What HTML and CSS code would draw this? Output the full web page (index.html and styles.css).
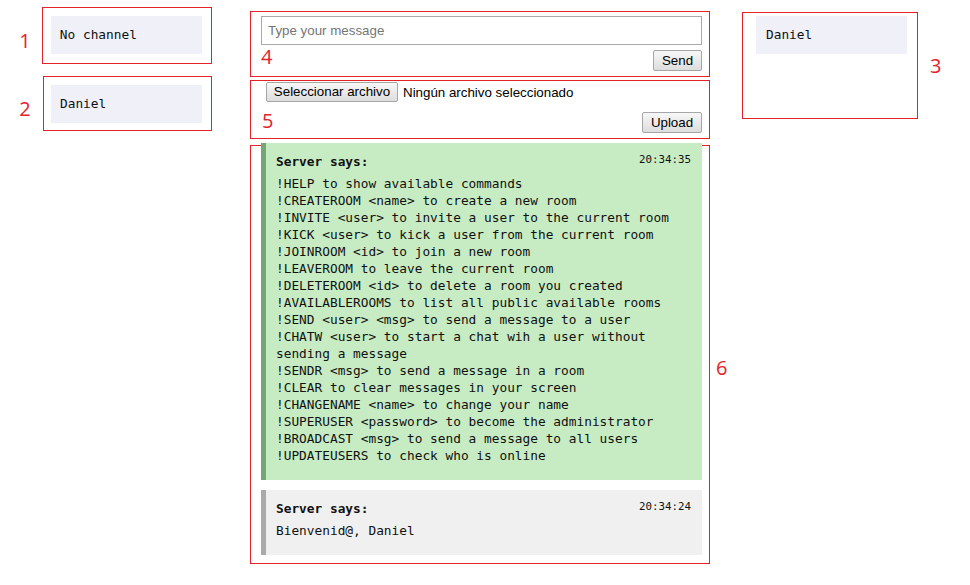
FILE: index.html
```html
<!DOCTYPE html>
<html>
<head>
<meta charset="utf-8">
<title>Chat</title>
<link rel="stylesheet" href="styles.css">
</head>
<body>
<div class="page">
  <div class="col-left">
    <div class="row row1">
      <span class="mark mark-left">1</span>
      <div class="box box1"><div class="chip">No channel</div></div>
    </div>
    <div class="row row2">
      <span class="mark mark-left">2</span>
      <div class="box box2"><div class="chip">Daniel</div></div>
    </div>
  </div>

  <div class="col-center">
    <div class="box box4">
      <input class="msg-input" type="text" placeholder="Type your message">
      <div class="bar">
        <span class="mark mark4">4</span>
        <button class="btn btn-send">Send</button>
      </div>
    </div>
    <div class="box box5">
      <div class="file-row">
        <button class="btn btn-file">Seleccionar archivo</button>
        <span class="file-name">Ningún archivo seleccionado</span>
      </div>
      <div class="bar bar5">
        <span class="mark mark5">5</span>
        <button class="btn btn-upload">Upload</button>
      </div>
    </div>
    <div class="row row6">
      <div class="box box6">
        <div class="messages">
          <div class="msg msg-help">
            <div class="msg-head"><span class="who">Server says:</span><span class="time">20:34:35</span></div>
            <div class="msg-body">
              <div>!HELP to show available commands</div>
              <div>!CREATEROOM &lt;name&gt; to create a new room</div>
              <div>!INVITE &lt;user&gt; to invite a user to the current room</div>
              <div>!KICK &lt;user&gt; to kick a user from the current room</div>
              <div>!JOINROOM &lt;id&gt; to join a new room</div>
              <div>!LEAVEROOM to leave the current room</div>
              <div>!DELETEROOM &lt;id&gt; to delete a room you created</div>
              <div>!AVAILABLEROOMS to list all public available rooms</div>
              <div>!SEND &lt;user&gt; &lt;msg&gt; to send a message to a user</div>
              <div>!CHATW &lt;user&gt; to start a chat wih a user without sending a message</div>
              <div>!SENDR &lt;msg&gt; to send a message in a room</div>
              <div>!CLEAR to clear messages in your screen</div>
              <div>!CHANGENAME &lt;name&gt; to change your name</div>
              <div>!SUPERUSER &lt;password&gt; to become the administrator</div>
              <div>!BROADCAST &lt;msg&gt; to send a message to all users</div>
              <div>!UPDATEUSERS to check who is online</div>
            </div>
          </div>
          <div class="msg msg-plain">
            <div class="msg-head"><span class="who">Server says:</span><span class="time">20:34:24</span></div>
            <div class="msg-body">
              <div>Bienvenid@, Daniel</div>
            </div>
          </div>
        </div>
      </div>
      <span class="mark mark6">6</span>
    </div>
  </div>

  <div class="col-right">
    <div class="row row3">
      <div class="box box3"><div class="chip chip3">Daniel</div></div>
      <span class="mark mark3">3</span>
    </div>
  </div>
</div>
</body>
</html>
```

FILE: styles.css
```css
* { box-sizing: border-box; }
html, body { margin: 0; padding: 0; background: #ffffff; }
body { font-family: "Liberation Sans", Arial, sans-serif; color: #000; }

.page { display: flex; align-items: flex-start; width: 970px; height: 585px; }

.row { display: flex; align-items: center; }

.box { border: 1px solid #e3222b; }

.mark {
  font-family: "Open Sans", "Liberation Sans", sans-serif;
  font-size: 20px;
  line-height: 20px;
  color: #e3222b;
}

/* left column */
.col-left { width: 212px; display: flex; flex-direction: column; }
.mark-left { width: 42px; text-align: center; padding-left: 8px; padding-top: 10px; }
.row1 { margin-top: 7px; }
.box1 { width: 171px; height: 57px; padding: 8px 0 0 8px; }
.row2 { margin-top: 12px; }
.box2 { width: 169px; height: 55px; margin-left: 1px; padding: 8px 0 0 7px; }

.chip {
  width: 151px;
  height: 38px;
  background: #eff0f8;
  padding-left: 9px;
  font-family: "DejaVu Sans Mono", "Liberation Mono", monospace;
  font-size: 12.8px;
  line-height: 38px;
  color: #111;
}
.chip3 { padding-left: 10px; }

/* center column */
.col-center { width: 478px; margin-left: 38px; display: flex; flex-direction: column; }

.box4 { width: 460px; height: 66px; margin-top: 11px; padding: 4px 7px 0 10px; }
.msg-input {
  display: block;
  width: 441px;
  height: 29px;
  border: 1px solid #a9a9a9;
  padding: 0 6px;
  font-family: "Liberation Sans", Arial, sans-serif;
  font-size: 13.33px;
  outline: none;
}
.msg-input::placeholder { color: #757575; }

.bar { display: flex; justify-content: space-between; align-items: flex-start; }
.mark4 { margin-top: 2px; margin-left: 0; }
.btn-send { margin-top: 5px; width: 49px; }

.btn {
  height: 21px;
  padding: 0 6px;
  border: 1px solid #a6a6a6;
  border-radius: 2px;
  background: linear-gradient(#f7f7f7, #dddddd);
  font-family: "Liberation Sans", Arial, sans-serif;
  font-size: 13.33px;
  color: #000;
  line-height: 19px;
}

.box5 { width: 460px; height: 59px; margin-top: 3px; padding: 1px 7px 0 11px; }
.file-row { display: flex; align-items: center; margin-left: 4px; }
.btn-file { width: 132px; height: 20px; line-height: 18px; padding: 0; }
.file-name { margin-left: 5px; font-size: 13.33px; color: #000; }
.bar5 { margin-top: 10px; }
.mark5 { margin-top: -1px; }
.btn-upload { width: 60px; }

.row6 { margin-top: 6px; }
.box6 { width: 460px; height: 419px; padding: 0 7px 0 10px; }
.mark6 { margin-left: 6px; padding-top: 26px; }

.messages { margin-top: -3px; display: flex; flex-direction: column; gap: 10px; }
.msg {
  width: 441px;
  padding: 10px 11px 16px 10px;
  border-left: 5px solid #77a676;
  font-family: "DejaVu Sans Mono", "Liberation Mono", monospace;
  font-size: 12.8px;
  line-height: 17px;
  color: #111;
}
.msg-help { background: #c7ecc4; }
.msg-plain { background: #f0f0f0; border-left-color: #aaaaaa; }
.msg-head { display: flex; justify-content: space-between; align-items: flex-start; margin-bottom: 5px; }
.who { font-weight: bold; }
.time { font-size: 10.8px; line-height: 13px; }

/* right column */
.col-right { margin-left: 14px; }
.row3 { margin-top: 12px; }
.box3 { width: 176px; height: 107px; padding: 3px 0 0 13px; }
.mark3 { margin-left: 12px; }
```
